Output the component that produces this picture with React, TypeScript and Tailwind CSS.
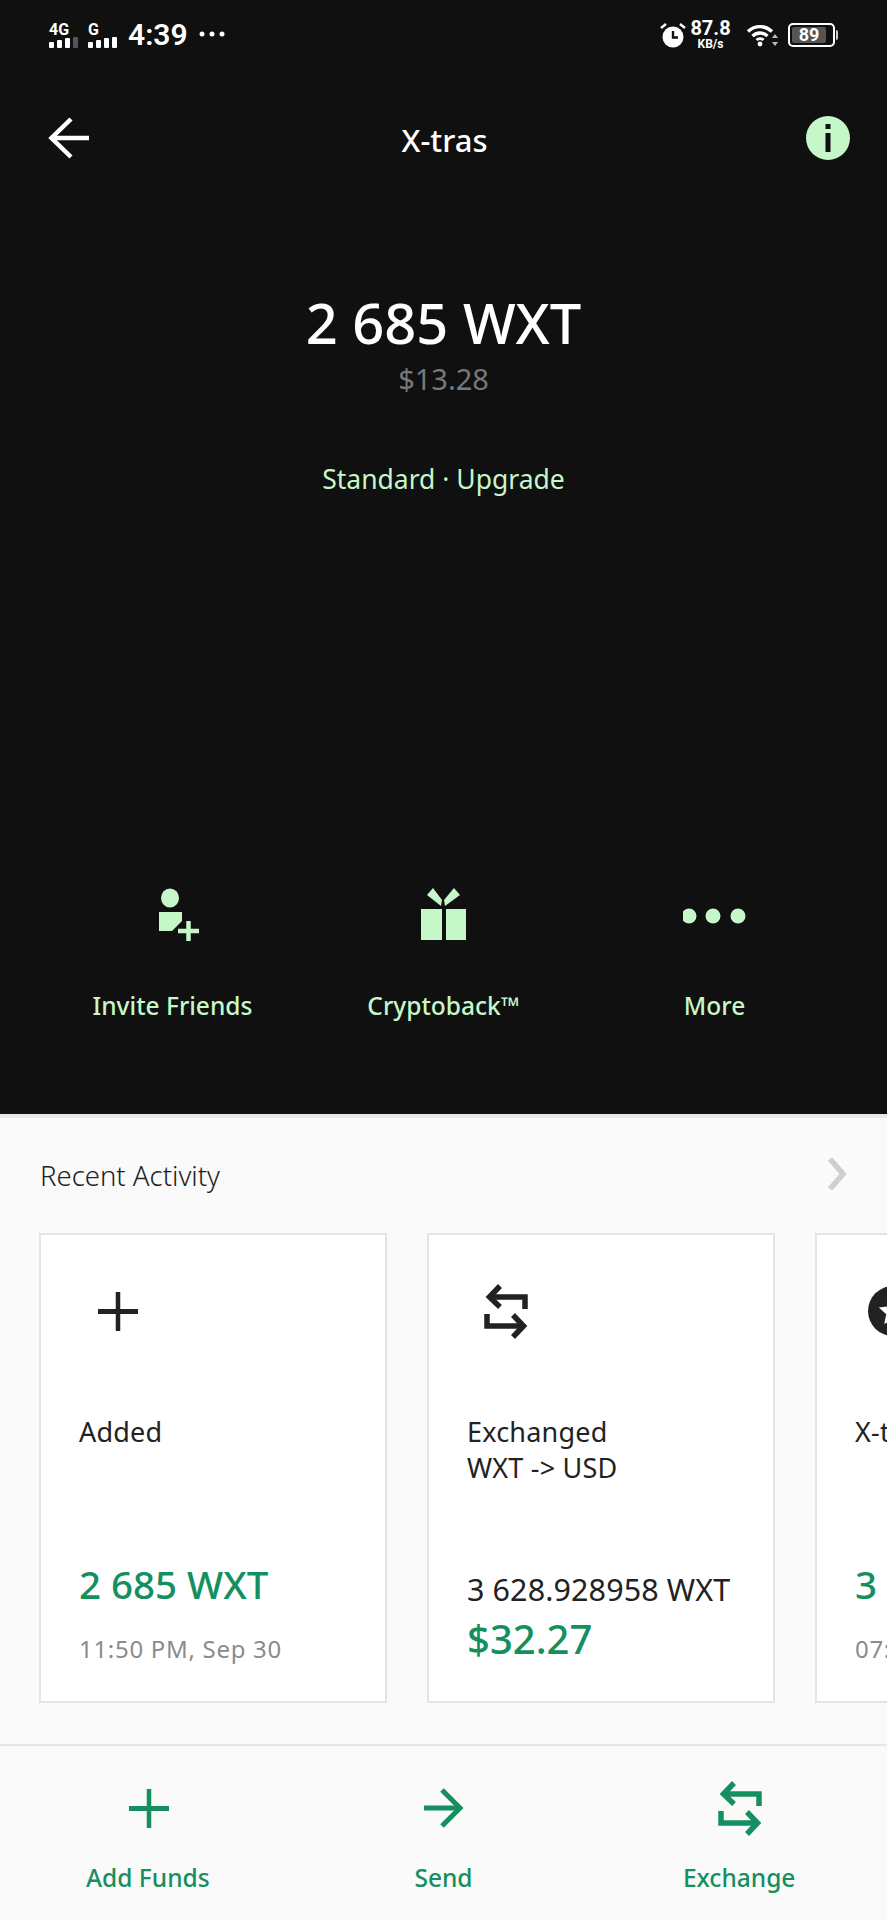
const BLACK = "#101010";

function Signal({ label, dim }: { label: string; dim?: boolean }) {
  return (
    <div className="flex w-[30px] flex-col">
      <span className="h-[15px] text-[16px] leading-[15px] font-bold text-white">{label}</span>
      <svg width="30" height="11" viewBox="0 0 30 11">
        <rect x="0" y="5" width="5" height="6" rx="1" fill="#fff" />
        <rect x="8" y="3" width="5" height="8" rx="1" fill="#fff" />
        <rect x="16" y="1" width="5" height="10" rx="1" fill="#fff" />
        <rect x="24" y="0" width="5" height="11" rx="1" fill={dim ? "#555" : "#fff"} />
      </svg>
    </div>
  );
}

function StatusBar() {
  return (
    <div className="flex h-[70px] items-center justify-between pr-[49px] pl-[49px] font-['Roboto',sans-serif] text-white">
      <div className="flex items-center">
        <Signal label="4G" dim />
        <div className="ml-[9px]">
          <Signal label="G" />
        </div>
        <span className="ml-[10px] text-[30px] leading-none font-semibold">4:39</span>
        <svg width="26" height="6" viewBox="0 0 26 6" className="mt-[-2px] ml-[11px]">
          <circle cx="3" cy="3" r="2.5" fill="#fff" />
          <circle cx="13" cy="3" r="2.5" fill="#fff" />
          <circle cx="23" cy="3" r="2.5" fill="#fff" />
        </svg>
      </div>
      <div className="flex items-center">
        <svg width="26" height="26" viewBox="0 0 26 26">
          <circle cx="13" cy="15" r="10.5" fill="#fff" />
          <path d="M13 9v6.5h5" fill="none" stroke={BLACK} strokeWidth="2.4" />
          <path d="M1 6l5-4M25 6l-5-4" stroke="#fff" strokeWidth="2.4" />
        </svg>
        <div className="mb-[2px] ml-[4px] flex w-[41px] flex-col items-center">
          <span className="text-[20px] leading-[20px] font-bold">87.8</span>
          <span className="text-[12px] leading-[12px] font-bold">KB/s</span>
        </div>
        <svg width="32" height="24" viewBox="0 0 32 24" className="ml-[15px]">
          <path d="M2 8.5c7-6.5 17-6.5 24 0" fill="none" stroke="#fff" strokeWidth="3.4" />
          <path d="M6.5 13c4.500-4 10.500-4 15 0" fill="none" stroke="#fff" strokeWidth="3.4" />
          <path d="M10.500 17c2-1.800 5-1.800 7 0" fill="none" stroke="#fff" strokeWidth="3" />
          <circle cx="14" cy="21" r="2.400" fill="#fff" />
          <path d="M29 11l-3 4h6zM29 23l-3-4h6z" fill="#bbb" />
        </svg>
        <div className="ml-[10px] flex items-center">
          <div className="flex h-[24px] w-[47px] items-center rounded-[5px] border-2 border-white p-[2px]">
            <div className="flex h-full w-[34px] items-center justify-center rounded-[2px] bg-[#555] text-[18px] leading-none font-bold">
              89
            </div>
          </div>
          <div className="ml-[1px] h-[10px] w-[2px] rounded-r-sm bg-[#ccc]" />
        </div>
      </div>
    </div>
  );
}

function PlusIcon({ color }: { color: string }) {
  return (
    <svg width="56" height="56" viewBox="0 0 56 56" fill="none" stroke={color}>
      <path d="M9 28.500h40" strokeWidth="5" />
      <path d="M29 9v39" strokeWidth="4.500" />
    </svg>
  );
}

function ExchangeIcon({ color }: { color: string }) {
  return (
    <svg width="56" height="56" viewBox="0 0 56 56" fill="none" stroke={color} strokeWidth="5.5">
      <path d="M23 3L12.500 14 23 24" />
      <path d="M12.500 14H48v12" />
      <path d="M10 31v12h36.500" />
      <path d="M36 32l10.500 11L36 54" />
    </svg>
  );
}

function SendIcon({ color }: { color: string }) {
  return (
    <svg width="56" height="56" viewBox="0 0 56 56" fill="none" stroke={color} strokeWidth="5">
      <path d="M9 28h36" />
      <path d="M27 10l18 18-18 18" />
    </svg>
  );
}

const MINT = "#c6f7c8";

function InviteIcon() {
  return (
    <svg width="56" height="56" viewBox="0 0 56 56" fill={MINT}>
      <ellipse cx="25" cy="11" rx="9" ry="9.500" />
      <path d="M14 25h23v9l-10 10H14z" />
      <path d="M33 44h21M43.500 34v20" stroke={MINT} strokeWidth="4.500" fill="none" />
    </svg>
  );
}

function GiftIcon() {
  return (
    <svg width="56" height="56" viewBox="0 0 56 56" fill={MINT}>
      <rect x="5" y="22" width="21" height="31" />
      <rect x="30" y="22" width="20" height="31" />
      <path d="M11 8l6-7 9 12-1 6z" />
      <path d="M29 19l-1-6 10-12 6 7z" />
    </svg>
  );
}

function DotsIcon() {
  return (
    <svg width="64" height="56" viewBox="0 0 64 56" fill={MINT}>
      <circle cx="6" cy="29" r="7.500" />
      <circle cx="30" cy="29" r="7.500" />
      <circle cx="55" cy="29" r="7.500" />
    </svg>
  );
}

function Hero() {
  const actions = [
    { label: "Invite Friends", icon: <InviteIcon /> },
    { label: "Cryptoback™", icon: <GiftIcon /> },
    { label: "More", icon: <DotsIcon /> },
  ];

  return (
    <section className="h-[1114px] bg-[#101010]">
      <StatusBar />
      <div className="grid h-[136px] grid-cols-[1fr_auto_1fr] items-center pr-[39px] pl-[41px]">
        <svg width="56" height="56" viewBox="0 0 56 56" fill="none" stroke="#fff" strokeWidth="4.500">
          <path d="M10 28h38" />
          <path d="M30 9L10.500 28 30 47" />
        </svg>
        <h1 className="pt-[4px] text-[31px] leading-none font-medium text-white">X-tras</h1>
        <div className="mr-[-2px] flex h-[44px] w-[44px] items-center justify-center justify-self-end rounded-full bg-[#c6f7c8]">
          <svg width="8" height="28" viewBox="0 0 8 28" fill={BLACK}>
            <rect x="1.500" y="0" width="5" height="5" />
            <rect x="1.500" y="9" width="5" height="19" />
          </svg>
        </div>
      </div>
      <p className="mt-[84px] text-center text-[56px] leading-[64px] font-medium text-white">2 685 WXT</p>
      <p className="mt-[7px] text-center text-[29px] leading-[36px] text-[#77797a]">$13.28</p>
      <p className="mt-[64px] text-center text-[26.5px] leading-[36px] text-[#c6f7c8]">Standard · Upgrade</p>
      <div className="mt-[390px] grid grid-cols-3 px-[37px]">
        {actions.map((action) => (
          <div className="flex flex-col items-center" key={action.label}>
            {action.icon}
            <span className="mt-[47px] text-[24.5px] leading-[32px] font-medium text-[#c6f7c8]">
              {action.label}
            </span>
          </div>
        ))}
      </div>
    </section>
  );
}

type Activity = {
  icon: React.ReactNode;
  title: string[];
  amount: string;
  fiat?: string;
  date?: string;
};

const activity: Activity[] = [
  {
    icon: <PlusIcon color="#222" />,
    title: ["Added"],
    amount: "2 685 WXT",
    date: "11:50 PM, Sep 30",
  },
  {
    icon: <ExchangeIcon color="#222" />,
    title: ["Exchanged", "WXT -> USD"],
    amount: "3 628.928958 WXT",
    fiat: "$32.27",
  },
  {
    icon: (
      <svg width="56" height="56" viewBox="0 0 56 56">
        <circle cx="28" cy="28" r="25" fill="#222" />
        <path d="M28 14l4.200 9.300 10 1.100-7.500 6.800 2.100 9.900-8.800-5-8.800 5 2.100-9.900-7.500-6.800 10-1.100z" fill="#fff" />
      </svg>
    ),
    title: ["X-tras Reward"],
    amount: "3 628 WXT",
    date: "07:50 PM, Sep 29",
  },
];

function ActivityCard({ item }: { item: Activity }) {
  return (
    <article className="h-[470px] w-[348px] shrink-0 border-2 border-[#e4e4e4] bg-white pt-[48px] pl-[38px]">
      <div className="flex w-[76px] justify-center">{item.icon}</div>
      <div className="mt-[75px] h-[72px] text-[27px] leading-[36px] tracking-[0.2px] text-[#222]">
        {item.title.map((line) => (
          <p key={line}>{line}</p>
        ))}
      </div>
      {item.fiat ? (
        <>
          <p className="mt-[85px] text-[30.5px] leading-[36px] tracking-[0.1px] whitespace-nowrap text-[#222]">{item.amount}</p>
          <p className="mt-[8px] text-[40px] leading-[48px] font-medium text-[#168f60]">{item.fiat}</p>
        </>
      ) : (
        <>
          <p className="mt-[74px] text-[38.5px] leading-[48px] font-medium whitespace-nowrap text-[#168f60]">{item.amount}</p>
          <p className="mt-[25px] text-[24px] leading-[32px] tracking-[0.7px] whitespace-nowrap text-[#8b8b8b]">{item.date}</p>
        </>
      )}
    </article>
  );
}

function BottomBar() {
  const items = [
    { label: "Add Funds", icon: <PlusIcon color="#168f60" /> },
    { label: "Send", icon: <SendIcon color="#168f60" /> },
    { label: "Exchange", icon: <ExchangeIcon color="#168f60" /> },
  ];

  return (
    <div className="grid h-[174px] grid-cols-3 border-t-2 border-[#e6e6e6] pt-[34px]">
      {items.map((item) => (
        <div className="flex flex-col items-center" key={item.label}>
          {item.icon}
          <span className="mt-[26px] text-[24.5px] leading-[32px] font-medium text-[#168f60]">{item.label}</span>
        </div>
      ))}
    </div>
  );
}

export default function App() {
  return (
    <main className="h-[1920px] w-[887px] overflow-hidden bg-[#fafafa] font-['Noto_Sans',sans-serif]">
      <Hero />
      <section className="border-t-4 border-[#e8e8e8]">
        <div className="flex h-[115px] items-center justify-between pr-[40px] pl-[40px]">
          <h2 className="text-[27.5px] leading-[36px] font-light text-[#222]">Recent Activity</h2>
          <svg width="20" height="32" viewBox="0 0 20 32" fill="none" stroke="#cfcfcf" strokeWidth="5.5" className="mt-[-4px]">
            <path d="M3 1l13 15L3 31" />
          </svg>
        </div>
        <div className="flex gap-[40px] overflow-hidden pl-[39px]">
          {activity.map((item) => (
            <ActivityCard item={item} key={item.amount} />
          ))}
        </div>
      </section>
      <div className="mt-[41px]">
        <BottomBar />
      </div>
    </main>
  );
}
